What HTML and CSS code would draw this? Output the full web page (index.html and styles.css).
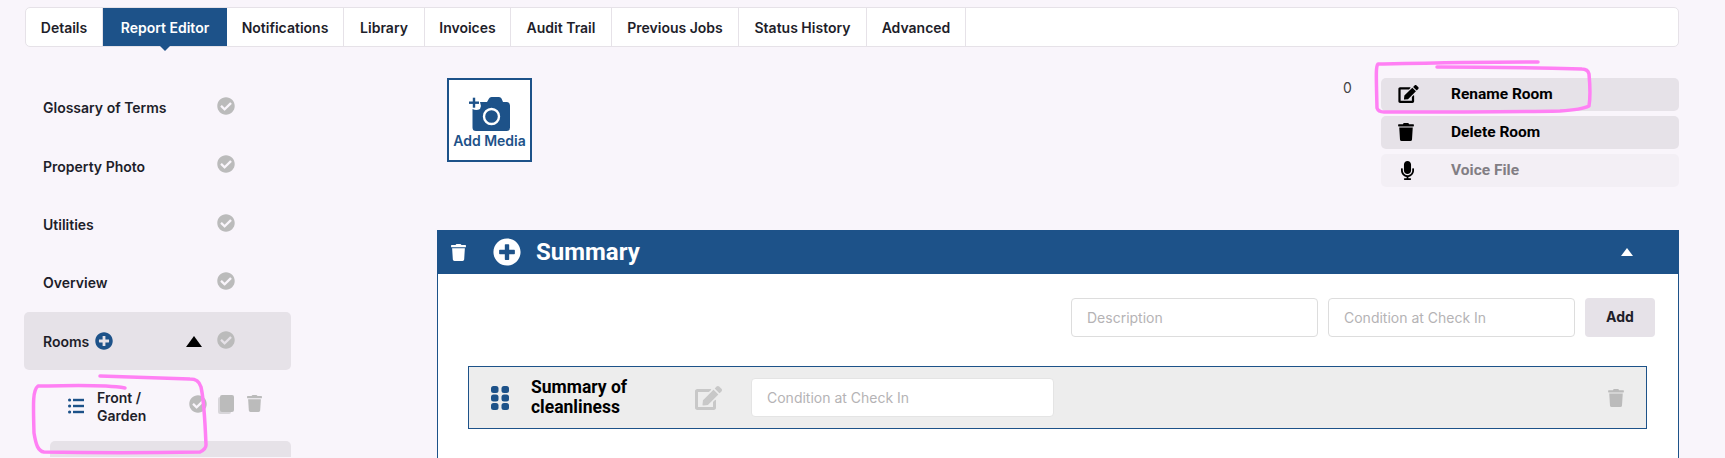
FILE: index.html
```html
<!DOCTYPE html>
<html lang="en">
<head>
    <meta charset="UTF-8">
    <meta name="viewport" content="width=device-width, initial-scale=1.0">
    <title>Report Editor</title>
    <link rel="stylesheet" href="styles.css">
</head>
<body>

<svg class="icon-defs" width="0" height="0">
    <symbol id="i-check" viewBox="0 0 512 512"><path d="M504 256c0 136.967-111.033 248-248 248S8 392.967 8 256 119.033 8 256 8s248 111.033 248 248zM227.314 387.314l184-184c6.248-6.248 6.248-16.379 0-22.627l-22.627-22.627c-6.248-6.249-16.379-6.249-22.628 0L216 308.118l-70.059-70.059c-6.248-6.248-16.379-6.248-22.628 0l-22.627 22.627c-6.248 6.248-6.248 16.379 0 22.627l104 104c6.249 6.249 16.379 6.249 22.628.001z"/></symbol>
    <symbol id="i-plus" viewBox="0 0 512 512"><path d="M256 8C119 8 8 119 8 256s111 248 248 248 248-111 248-248S393 8 256 8zm144 276c0 6.6-5.4 12-12 12h-92v92c0 6.6-5.4 12-12 12h-56c-6.6 0-12-5.4-12-12v-92h-92c-6.6 0-12-5.4-12-12v-56c0-6.6 5.4-12 12-12h92v-92c0-6.6 5.4-12 12-12h56c6.6 0 12 5.4 12 12v92h92c6.6 0 12 5.4 12 12v56z"/></symbol>
    <symbol id="i-trash" viewBox="0 0 448 512"><path d="M432 32H312l-9.4-18.7A24 24 0 0 0 281.1 0H166.8a23.72 23.72 0 0 0-21.4 13.3L136 32H16A16 16 0 0 0 0 48v32a16 16 0 0 0 16 16h416a16 16 0 0 0 16-16V48a16 16 0 0 0-16-16zM53.2 467a48 48 0 0 0 47.9 45h245.8a48 48 0 0 0 47.9-45L416 128H32z"/></symbol>
    <symbol id="i-edit" viewBox="0 0 576 512"><path d="M402.6 83.2l90.2 90.2c3.8 3.8 3.8 10 0 13.8L274.4 405.6l-92.8 10.3c-12.4 1.4-22.9-9.1-21.5-21.5l10.3-92.8L388.8 83.2c3.8-3.8 10-3.8 13.8 0zm162-22.9l-48.8-48.8c-15.2-15.2-39.9-15.2-55.2 0l-35.4 35.4c-3.8 3.8-3.8 10 0 13.8l90.2 90.2c3.8 3.8 10 3.8 13.8 0l35.4-35.4c15.2-15.3 15.2-40 0-55.2zM384 346.2V448H64V128h229.8c3.2 0 6.2-1.3 8.5-3.5l40-40c7.6-7.6 2.2-20.5-8.5-20.5H48C21.5 64 0 85.5 0 112v352c0 26.5 21.5 48 48 48h352c26.5 0 48-21.5 48-48V306.2c0-10.7-12.9-16-20.5-8.5l-40 40c-2.2 2.3-3.5 5.3-3.5 8.5z"/></symbol>
    <symbol id="i-mic" viewBox="0 0 352 512"><path d="M176 352c53.02 0 96-42.98 96-96V96c0-53.02-42.98-96-96-96S80 42.98 80 96v160c0 53.02 42.98 96 96 96zm160-160h-16c-8.84 0-16 7.16-16 16v48c0 74.8-64.49 134.82-140.79 127.38C96.71 376.89 48 317.11 48 250.3V208c0-8.84-7.16-16-16-16H16c-8.84 0-16 7.16-16 16v40.16c0 89.64 63.97 169.55 152 181.69V464H96c-8.84 0-16 7.16-16 16v16c0 8.84 7.16 16 16 16h160c8.84 0 16-7.16 16-16v-16c0-8.84-7.16-16-16-16h-56v-33.77C285.71 418.47 352 344.9 352 256v-48c0-8.84-7.16-16-16-16z"/></symbol>
</svg>

<div class="tabs">
    <a class="tab">Details</a>
    <a class="tab active">Report Editor</a>
    <a class="tab">Notifications</a>
    <a class="tab">Library</a>
    <a class="tab">Invoices</a>
    <a class="tab">Audit Trail</a>
    <a class="tab">Previous Jobs</a>
    <a class="tab">Status History</a>
    <a class="tab">Advanced</a>
</div>

<div class="content">
    <div class="sidebar">
        <div class="side-item"><span class="side-label">Glossary of Terms</span><svg class="check"><use href="#i-check"/></svg></div>
        <div class="side-item"><span class="side-label">Property Photo</span><svg class="check"><use href="#i-check"/></svg></div>
        <div class="side-item"><span class="side-label">Utilities</span><svg class="check"><use href="#i-check"/></svg></div>
        <div class="side-item"><span class="side-label">Overview</span><svg class="check"><use href="#i-check"/></svg></div>
        <div class="side-item rooms">
            <span class="side-label">Rooms</span>
            <svg class="rooms-plus"><use href="#i-plus"/></svg>
            <span class="rooms-arrow"></span>
            <svg class="check"><use href="#i-check"/></svg>
        </div>
        <div class="room">
            <svg class="room-list" viewBox="0 0 16 16">
                <circle cx="1.6" cy="2" r="1.6"/><circle cx="1.6" cy="8" r="1.6"/><circle cx="1.6" cy="14" r="1.6"/>
                <rect x="5" y="0.8" width="11" height="2.4"/><rect x="5" y="6.8" width="11" height="2.4"/><rect x="5" y="12.8" width="11" height="2.4"/>
            </svg>
            <span class="room-name">Front /<br>Garden</span>
            <svg class="check room-check"><use href="#i-check"/></svg>
            <svg class="room-copy" viewBox="0 0 16 19">
                <rect class="copy-back" x="0" y="2" width="13" height="17" rx="2"/>
                <rect x="2" y="0" width="14" height="17" rx="2"/>
            </svg>
            <svg class="room-trash"><use href="#i-trash"/></svg>
        </div>
        <div class="room-next"></div>
    </div>

    <div class="main">
        <div class="top-row">
            <div class="add-media">
                <svg class="camera" viewBox="0 0 41 34">
                    <path d="M18 5 L20 1.5 Q20.6 0 22.5 0 H30 Q31.8 0 32.5 1.5 L34 5 H37.5 Q41 5 41 8.5 V30.5 Q41 34 37.5 34 H7 Q3.5 34 3.5 30.5 V12 A8 8 0 0 0 11 12 A8 8 0 0 0 11 5 Z"/>
                    <circle class="lens" cx="22.5" cy="19.5" r="7.5"/>
                    <rect x="0" y="4.5" width="10" height="2.4"/>
                    <rect x="3.8" y="0.7" width="2.4" height="10"/>
                </svg>
                <span>Add Media</span>
            </div>
            <div class="media-count">0</div>
            <div class="room-actions">
                <div class="action"><span class="action-icon"><svg class="ic-edit"><use href="#i-edit"/></svg></span>Rename Room</div>
                <div class="action"><span class="action-icon"><svg class="ic-trash"><use href="#i-trash"/></svg></span>Delete Room</div>
                <div class="action disabled"><span class="action-icon"><svg class="ic-mic"><use href="#i-mic"/></svg></span>Voice File</div>
            </div>
        </div>

        <div class="panel">
            <div class="panel-head">
                <svg class="head-trash"><use href="#i-trash"/></svg>
                <svg class="head-plus"><use href="#i-plus"/></svg>
                <h2>Summary</h2>
                <span class="head-arrow"></span>
            </div>
            <div class="panel-body">
                <div class="add-row">
                    <input type="text" placeholder="Description">
                    <input type="text" placeholder="Condition at Check In">
                    <button class="add-btn">Add</button>
                </div>
                <div class="line-item">
                    <svg class="grip" viewBox="0 0 18 24">
                        <rect width="7.5" height="7" rx="2.5"/><rect x="10.5" width="7.5" height="7" rx="2.5"/>
                        <rect y="8.5" width="7.5" height="7" rx="2.5"/><rect x="10.5" y="8.5" width="7.5" height="7" rx="2.5"/>
                        <rect y="17" width="7.5" height="7" rx="2.5"/><rect x="10.5" y="17" width="7.5" height="7" rx="2.5"/>
                    </svg>
                    <div class="line-name">Summary of cleanliness</div>
                    <svg class="line-edit"><use href="#i-edit"/></svg>
                    <input type="text" class="line-input" placeholder="Condition at Check In">
                    <svg class="line-trash"><use href="#i-trash"/></svg>
                </div>
            </div>
        </div>
    </div>
</div>

<!-- hand drawn highlights on top of the screenshot -->
<svg class="scribble" width="1725" height="458">
    <path d="M125 388 C100 384 70 386 38 386 C33 390 33 400 34 433 C36 445 38 451 44 452 C90 453 150 453 200 452 C204 450 206 448 206 445 C205 420 204 400 201 387 C199 380 195 379 190 379 C160 378 130 377 100 376"/>
    <path d="M1538 62 C1480 62 1430 63 1378 64 C1376 66 1376 70 1377 108 C1378 111 1381 112 1384 112 C1440 112 1510 112 1560 111 C1575 110 1585 108 1589 106 C1590 100 1590 85 1589 74 C1588 70 1585 69 1582 69 C1540 68 1480 67 1437 67"/>
</svg>

</body>
</html>
```

FILE: styles.css
```css
* {
    box-sizing: border-box;
}
html, body {
    height: 458px;
    overflow: hidden;
}
body {
    margin: 0;
    background-color: #f9f5fb;
    font-family: Inter, "Noto Sans", sans-serif;
    color: #1e1e2a;
    position: relative;
}
.icon-defs {
    position: absolute;
}
svg {
    display: block;
    flex: none;
}

/* tabs */
.tabs {
    display: grid;
    grid-template-columns: 77px 124px 117px 81px 86px 101px 127px 128px 99px 1fr;
    height: 40px;
    margin: 7px 46px 0 25px;
    background: #ffffff;
    border: 1px solid #e6e2e8;
    border-radius: 5px;
}
.tab {
    display: flex;
    align-items: center;
    justify-content: center;
    border-right: 1px solid #e6e2e8;
    font-size: 14px;
    font-weight: 600;
    position: relative;
}
.tab.active {
    background: #1d5289;
    color: #ffffff;
    border-right: none;
}
.tab.active::after {
    content: "";
    position: absolute;
    left: 50%;
    bottom: -5px;
    margin-left: -5px;
    border-left: 5px solid transparent;
    border-right: 5px solid transparent;
    border-top: 5px solid #1d5289;
}

.content {
    display: flex;
    height: 411px;
    margin-left: 24px;
    margin-right: 46px;
}

/* left column */
.sidebar {
    width: 267px;
    flex: none;
    padding-top: 31px;
}
.side-item {
    display: flex;
    align-items: center;
    height: 58.4px;
    padding-left: 19px;
    font-size: 14px;
    font-weight: 600;
    position: relative;
}
.side-label {
    margin-top: 1px;
}
.check {
    width: 18px;
    height: 18px;
    fill: #bbbbbb;
    position: absolute;
    left: 193px;
    top: 19px;
}
.rooms {
    height: 58px;
    background: #e6e2e8;
    border-radius: 5px;
}
.rooms-plus {
    width: 18px;
    height: 18px;
    fill: #1d5289;
    margin-left: 6px;
}
.rooms-arrow {
    position: absolute;
    left: 162px;
    top: 24px;
    border-left: 8.5px solid transparent;
    border-right: 8.5px solid transparent;
    border-bottom: 11px solid #000000;
}
.room {
    display: flex;
    height: 71px;
    padding: 19px 0 0 44px;
    position: relative;
}
.room-list {
    width: 16px;
    height: 16px;
    fill: #1d5289;
    margin-top: 9px;
}
.room-name {
    margin-left: 13px;
    font-size: 14px;
    font-weight: 600;
    line-height: 18px;
}
.room-check {
    left: 165px;
    top: 25px;
}
.room-copy {
    position: absolute;
    left: 194px;
    top: 25px;
    width: 16px;
    height: 19px;
    fill: #bbbbbb;
}
.copy-back {
    fill: #d8d6da;
}
.room-trash {
    position: absolute;
    left: 223px;
    top: 25px;
    width: 15px;
    height: 17px;
    fill: #bbbbbb;
}
.room-next {
    height: 16px;
    margin-left: 26px;
    background: #e6e2e8;
    border-radius: 5px 5px 0 0;
}

/* right column */
.main {
    flex: 1;
    min-width: 0;
    padding-left: 146px;
}
.top-row {
    display: flex;
    height: 183px;
    padding-top: 31px;
}
.add-media {
    width: 85px;
    height: 84px;
    margin-left: 10px;
    border: 2px solid #1d5289;
    background: #ffffff;
    display: flex;
    flex-direction: column;
    align-items: center;
    padding-top: 17px;
    color: #1d5289;
    font-size: 14px;
    font-weight: 600;
    line-height: 17px;
    white-space: nowrap;
}
.camera {
    width: 41px;
    height: 34px;
    margin-bottom: 1px;
    fill: #1d5289;
}
.lens {
    fill: none;
    stroke: #ffffff;
    stroke-width: 2.4;
}
.media-count {
    margin-left: auto;
    margin-top: 1px;
    width: 38px;
    font-size: 14px;
    font-weight: 400;
    color: #444444;
    line-height: 17px;
}
.room-actions {
    width: 298px;
    display: flex;
    flex-direction: column;
    gap: 5.5px;
}
.action {
    display: flex;
    align-items: center;
    height: 32.5px;
    background: #e6e2e8;
    border-radius: 5px;
    font-family: Roboto, sans-serif;
    font-size: 15.5px;
    font-weight: 700;
    color: #000000;
}
.action.disabled {
    background: #f3eff5;
    color: #827e84;
}
.action-icon {
    width: 70px;
    padding-left: 17px;
    flex: none;
}
.action-icon svg {
    fill: #000000;
}
.ic-edit {
    width: 21px;
    height: 18px;
}
.ic-trash {
    width: 16px;
    height: 18px;
}
.ic-mic {
    width: 13px;
    height: 19px;
    margin-left: 3px;
}

/* summary panel */
.panel {
    background: #ffffff;
    border: 1px solid #1d5289;
    border-bottom: none;
    height: 228px;
}
.panel-head {
    display: flex;
    align-items: center;
    height: 44px;
    margin: -1px -1px 0;
    padding-left: 14px;
    background: #1d5289;
    color: #ffffff;
}
.head-trash {
    width: 15px;
    height: 17px;
    fill: #ffffff;
}
.head-plus {
    width: 28px;
    height: 28px;
    fill: #ffffff;
    margin-left: 27px;
}
.panel-head h2 {
    margin: -1px 0 0 15px;
    font-family: Roboto, sans-serif;
    font-size: 24px;
    font-weight: 700;
}
.head-arrow {
    margin-left: auto;
    margin-right: 46px;
    border-left: 6px solid transparent;
    border-right: 6px solid transparent;
    border-bottom: 8px solid #ffffff;
}
.panel-body {
    padding: 24px 23px 0 30px;
}
.add-row {
    display: flex;
    justify-content: flex-end;
    gap: 10px;
}
input {
    width: 247px;
    height: 39px;
    padding: 0 15px;
    border: 1px solid #dddddd;
    border-radius: 4px;
    background: #ffffff;
    font-family: Inter, "Noto Sans", sans-serif;
    font-size: 14px;
}
input::placeholder {
    color: #b5b3b5;
}
.add-btn {
    width: 70px;
    height: 39px;
    border: none;
    border-radius: 4px;
    background: #e6e2e8;
    color: #1e1e2a;
    font-family: Inter, sans-serif;
    font-size: 14px;
    font-weight: 700;
    padding-bottom: 3px;
}
.line-item {
    display: flex;
    align-items: center;
    height: 63px;
    margin-top: 29px;
    margin-right: 8px;
    background: #ededed;
    border: 1px solid #1d5289;
}
.grip {
    width: 18px;
    height: 24px;
    fill: #1d5289;
    margin-left: 22px;
}
.line-name {
    width: 164px;
    margin: -2px 0 0 22px;
    font-family: Roboto, sans-serif;
    font-size: 17.5px;
    font-weight: 700;
    line-height: 20px;
    color: #000000;
}
.line-edit {
    width: 27px;
    height: 24px;
    fill: #c8c8c8;
}
.line-input {
    width: 303px;
    margin-left: 29px;
    border-color: #e4e4e4;
}
.line-trash {
    width: 16px;
    height: 18px;
    fill: #bbbbbb;
    margin-left: auto;
    margin-right: 22px;
}

/* pink marker on top */
.scribble {
    position: absolute;
    left: 0;
    top: 0;
    pointer-events: none;
}
.scribble path {
    fill: none;
    stroke: #ff80f4;
    stroke-width: 3.5;
    stroke-linecap: round;
    stroke-linejoin: round;
}
```
